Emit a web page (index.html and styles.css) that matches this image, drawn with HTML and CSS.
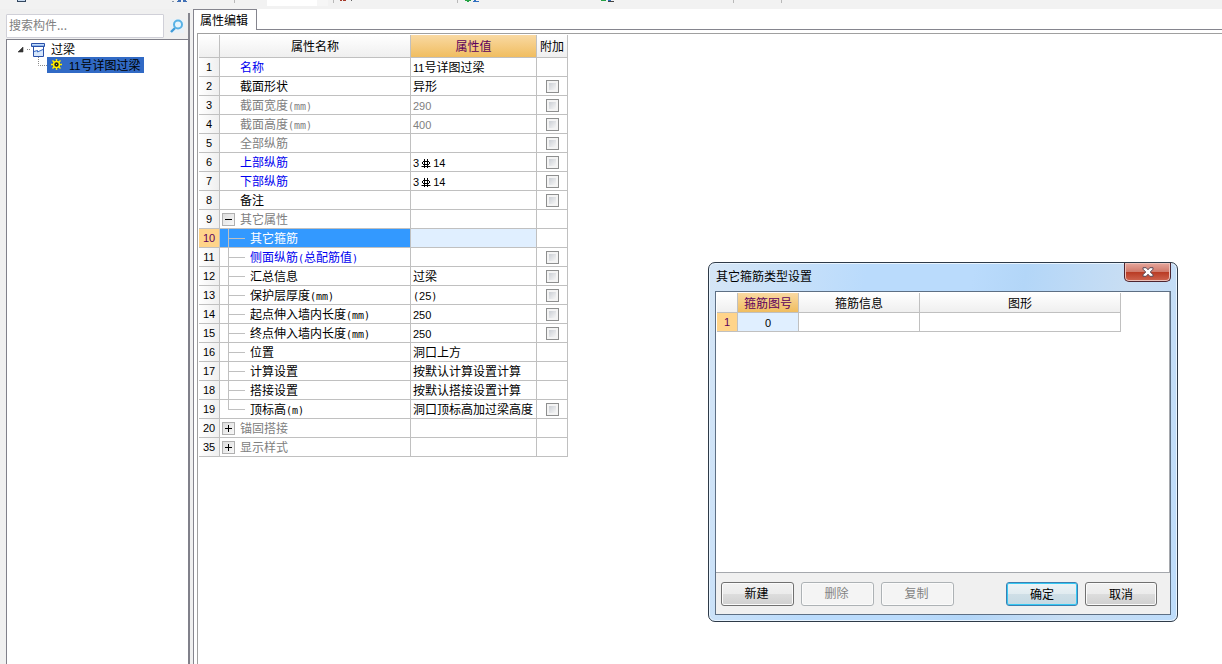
FILE: index.html
```html
<!DOCTYPE html>
<html lang="zh-CN">
<head>
<meta charset="utf-8">
<title>属性编辑</title>
<link rel="stylesheet" href="styles.css">
</head>
<body>
<header class="toolbar">
  <svg width="800" height="9" viewBox="0 0 800 9" aria-hidden="true">
    <path fill="#b9b9b9" d="M234 0h1v3h-1zM333 0h1v3h-1zM457 0h1v3h-1zM733 0h1v3h-1zM781 0h1v3h-1z"/>
    <path fill="#fff" d="M267 0h50v6h-50z"/><path fill="#f6f6f6" d="M317 0h11v6h-11z"/>
    <path fill="#c9dcf2" d="M18 0h7v1h-7z"/><path fill="#33475f" d="M17 0h1v2h-1zM25 0h1v2h-1zM17 1h9v1h-9z"/>
    <path fill="#3f6fb5" d="M178 0h3v2h-4v-1h1zM183 0h3v1h1v1h-4z"/><path fill="#8a98aa" d="M172 1h2v1h-2z"/>
    <path fill="#a53a2a" d="M340 0h2v1h-2zM343 0h3v1h-3z"/><path fill="#666" d="M351 0h1v1h-1z"/>
    <path fill="#25a244" d="M465 0h6v1h-2v1h-2v-1h-2zM601 0h5v1h-5z"/>
    <path fill="#2f6fc0" d="M474 0h2v1h3v1h-6v-1h1zM608 0h3v1h-3z"/><path fill="#444" d="M608 1h6v1h-6z"/>
  </svg>
</header>
<main class="workspace">
  <aside class="sidebar">
    <div class="search">
      <input class="search-input" type="text" placeholder="搜索构件..." aria-label="搜索构件">
      <button class="search-button" aria-label="搜索">
        <svg width="14" height="14" viewBox="0 0 14 14"><path d="M1 13l4-4" stroke="#3f9bd8" stroke-width="2.400"/><circle cx="8" cy="5.500" r="4" fill="#e6f5fd" stroke="#58b2e6" stroke-width="2"/></svg>
      </button>
    </div>
    <div class="tree">
      <div class="tree-row">
        <svg width="27" height="17" viewBox="0 0 27 17" aria-hidden="true">
          <path d="M5 6v5H0z" fill="#333" stroke="#333" stroke-width=".6"/><path d="M9 8.500h4" stroke="#888" stroke-dasharray="1 1"/>
          <path d="M15.500 5.500h10v10h-10z" fill="#d5e6fb" stroke="#2a50a8"/><path d="M13.500 2.500h13v3h-13z" fill="#8db6ee" stroke="#2a50a8"/><path d="M14 3h12v1H14z" fill="#c4dcfa"/><path d="M16 6h9v2l-3 1.500-2 .5v-1l-4 1z" fill="#fff"/><path d="M16 10.500l3.500-1v1.500l5.500-2.500" fill="none" stroke="#3b6cc4"/>
        </svg>
        <span class="tree-label">过梁</span>
      </div>
      <div class="tree-row tree-child">
        <svg width="9" height="16" viewBox="0 0 9 16" aria-hidden="true"><path d="M.5 0v8.500H9" fill="none" stroke="#888" stroke-dasharray="1 1"/></svg>
        <span class="tree-selected">
          <svg width="12" height="12" viewBox="0 0 12 12" aria-hidden="true"><circle cx="5.500" cy="5.500" r="4" fill="#222"/><path d="M5.500 0v2.500M5.500 8.500V11M0 5.500h2.500M8.500 5.500H11M1.500 1.500l2 2M7.500 7.500l2 2M9.500 1.500l-2 2M1.500 9.500l2-2" stroke="#fff000" stroke-width="1.400"/><circle cx="5.500" cy="5.500" r="3" fill="#222" stroke="#fff000" stroke-width="1.600"/><path d="M5 5h1v1H5z" fill="#fff000"/></svg>
          <span><span class="d">11</span>号详图过梁</span>
        </span>
      </div>
    </div>
  </aside>
  <section class="editor">
    <div class="tabs"><button class="tab">属性编辑</button><div class="tab-rest"></div></div>
    <div class="editor-body">
      <div class="grid-frame">
        <table class="grid props">
          <colgroup><col class="c-num"><col class="c-name"><col class="c-value"><col class="c-extra"></colgroup>
          <thead><tr><th></th><th>属性名称</th><th class="active">属性值</th><th>附加</th></tr></thead>
          <tbody>
            <tr><th>1</th><td class="name blue">名称</td><td><span class="d">11</span>号详图过梁</td><td></td></tr>
            <tr><th>2</th><td class="name">截面形状</td><td>异形</td><td class="tick"><input type="checkbox" aria-label="截面形状"></td></tr>
            <tr class="muted"><th>3</th><td class="name">截面宽度<span class="n">(mm)</span></td><td><span class="d">290</span></td><td class="tick"><input type="checkbox" aria-label="截面宽度"></td></tr>
            <tr class="muted"><th>4</th><td class="name">截面高度<span class="n">(mm)</span></td><td><span class="d">400</span></td><td class="tick"><input type="checkbox" aria-label="截面高度"></td></tr>
            <tr class="muted"><th>5</th><td class="name">全部纵筋</td><td></td><td class="tick"><input type="checkbox" aria-label="全部纵筋"></td></tr>
            <tr><th>6</th><td class="name blue">上部纵筋</td><td><span class="d">3</span><svg class="rebar" width="14" height="9" viewBox="0 0 14 9" role="img" aria-label="钢筋"><path d="M5.500 0v9M8.500 0v9M2.500 7.500h9" stroke="#000"/><path d="M4 2.500h6M4 5.500h6M3.500 3v2M10.500 3v2" fill="none" stroke="#000"/></svg><span class="d">14</span></td><td class="tick"><input type="checkbox" aria-label="上部纵筋"></td></tr>
            <tr><th>7</th><td class="name blue">下部纵筋</td><td><span class="d">3</span><svg class="rebar" width="14" height="9" viewBox="0 0 14 9" role="img" aria-label="钢筋"><path d="M5.500 0v9M8.500 0v9M2.500 7.500h9" stroke="#000"/><path d="M4 2.500h6M4 5.500h6M3.500 3v2M10.500 3v2" fill="none" stroke="#000"/></svg><span class="d">14</span></td><td class="tick"><input type="checkbox" aria-label="下部纵筋"></td></tr>
            <tr><th>8</th><td class="name">备注</td><td></td><td class="tick"><input type="checkbox" aria-label="备注"></td></tr>
            <tr class="muted"><th>9</th><td class="group"><div class="group-row"><button class="toggle" aria-label="收起"></button>其它属性</div></td><td></td><td></td></tr>
            <tr class="selected"><th>10</th><td class="child">其它箍筋</td><td></td><td></td></tr>
            <tr><th>11</th><td class="child blue">侧面纵筋<span class="n">(</span>总配筋值<span class="n">)</span></td><td></td><td class="tick"><input type="checkbox" aria-label="侧面纵筋"></td></tr>
            <tr><th>12</th><td class="child">汇总信息</td><td>过梁</td><td class="tick"><input type="checkbox" aria-label="汇总信息"></td></tr>
            <tr><th>13</th><td class="child">保护层厚度<span class="n">(mm)</span></td><td><span class="n">(</span><span class="d">25</span><span class="n">)</span></td><td class="tick"><input type="checkbox" aria-label="保护层厚度"></td></tr>
            <tr><th>14</th><td class="child">起点伸入墙内长度<span class="n">(mm)</span></td><td><span class="d">250</span></td><td class="tick"><input type="checkbox" aria-label="起点伸入墙内长度"></td></tr>
            <tr><th>15</th><td class="child">终点伸入墙内长度<span class="n">(mm)</span></td><td><span class="d">250</span></td><td class="tick"><input type="checkbox" aria-label="终点伸入墙内长度"></td></tr>
            <tr><th>16</th><td class="child">位置</td><td>洞口上方</td><td></td></tr>
            <tr><th>17</th><td class="child">计算设置</td><td>按默认计算设置计算</td><td></td></tr>
            <tr><th>18</th><td class="child">搭接设置</td><td>按默认搭接设置计算</td><td></td></tr>
            <tr><th>19</th><td class="child last">顶标高<span class="n">(m)</span></td><td>洞口顶标高加过梁高度</td><td class="tick"><input type="checkbox" aria-label="顶标高"></td></tr>
            <tr class="muted"><th>20</th><td class="group"><div class="group-row"><button class="toggle plus" aria-label="展开"></button>锚固搭接</div></td><td></td><td></td></tr>
            <tr class="muted"><th>35</th><td class="group"><div class="group-row"><button class="toggle plus" aria-label="展开"></button>显示样式</div></td><td></td><td></td></tr>
          </tbody>
        </table>
      </div>
    </div>
  </section>
</main>
<div class="dialog" role="dialog" aria-labelledby="dialog-title">
  <div class="titlebar">
    <span class="title" id="dialog-title">其它箍筋类型设置</span>
    <button class="close" aria-label="关闭">
      <svg width="12" height="10" viewBox="0 0 12 10"><path d="M1 .7h3.200L6 2.800 7.800.7H11v1.500L8.300 5 11 7.800v1.500H7.800L6 7.200 4.200 9.300H1V7.800L3.700 5 1 2.200z" fill="#fff" stroke="#5b4a58" stroke-width="1"/></svg>
    </button>
  </div>
  <div class="dialog-body">
    <div class="dialog-grid">
      <table class="grid stirrups">
        <colgroup><col class="c-num"><col class="c-code"><col class="c-info"><col class="c-shape"></colgroup>
        <thead><tr><th></th><th class="active">箍筋图号</th><th>箍筋信息</th><th>图形</th></tr></thead>
        <tbody><tr class="current"><th>1</th><td class="code"><span class="d">0</span></td><td></td><td></td></tr></tbody>
      </table>
    </div>
    <div class="actions">
      <button class="btn">新建</button>
      <button class="btn" disabled>删除</button>
      <button class="btn" disabled>复制</button>
      <span class="spacer"></span>
      <button class="btn answer primary">确定</button>
      <button class="btn answer">取消</button>
    </div>
  </div>
</div>
</body>
</html>
```
FILE: styles.css
```css
* { box-sizing: border-box; }

body {
  margin: 0;
  height: 100vh;
  display: flex;
  flex-direction: column;
  overflow: hidden;
  position: relative;
  background: #fff;
  color: #000;
  font: 12px/18px "Noto Sans CJK SC", sans-serif;
}

button, input { font: inherit; margin: 0; }
svg { display: block; flex: none; }

/* Half-width latin text and digits */
.n { font: 10px/10px "DejaVu Sans Mono", monospace; }
.d { font: 11px/11px "Liberation Sans", sans-serif; }

.toolbar { height: 9px; flex: none; overflow: hidden; background: #f2f2f2; }
.workspace { flex: 1; min-height: 0; display: flex; }

/* Component tree */
.sidebar {
  width: 193px;
  flex: none;
  display: flex;
  flex-direction: column;
  padding: 4px 3px 0 6px;
  background: #f0f0f0;
}
.search {
  height: 26px;
  display: flex;
  align-items: center;
  border-right: 2px solid #85858e;
}
.search-input {
  width: 158px;
  height: 24px;
  padding: 0 2px 4px;
  border: 1px solid #d0d0d8;
  border-radius: 1px;
  background: #fff;
}
.search-input::placeholder { color: #808080; opacity: 1; }
.search-button { margin-left: 6px; padding: 0; border: 0; background: #e9f1f7; }
.tree {
  flex: 1;
  padding: 1px 0 0 11px;
  border: 1px solid #80808a;
  border-right-width: 2px;
  border-bottom: 0;
  background: #fff;
}
.tree-row { height: 16px; display: flex; align-items: center; gap: 6px; }
.tree-child { gap: 0; padding-left: 20px; }
.tree-selected {
  height: 16px;
  display: flex;
  align-items: center;
  gap: 6px;
  padding: 0 4px;
  background: #316ac5;
}

/* Property editor */
.editor { flex: 1; min-width: 0; display: flex; flex-direction: column; }
.tabs { display: flex; height: 21px; }
.tab {
  width: 64px;
  padding: 0 2px 0 0;
  border: 1px solid #85858e;
  border-bottom: 0;
  background: #fff;
}
.tab-rest { flex: 1; border-bottom: 1px solid #85858e; }
.editor-body { flex: 1; padding: 3px 0 0 3px; border-left: 1px solid #85858e; }
.grid-frame {
  height: 100%;
  padding: 1px;
  border: 1px solid #a0a0a0;
  border-right: 0;
  border-bottom: 0;
}

.grid { table-layout: fixed; border-collapse: separate; border-spacing: 0; }
.grid th, .grid td {
  height: 19px;
  padding: 0 0 0 2px;
  border: solid #c0c0c0;
  border-width: 0 1px 1px 0;
  line-height: 16px;
  white-space: nowrap;
  overflow: hidden;
  text-align: left;
  vertical-align: middle;
}
.grid th {
  padding: 0;
  font-weight: normal;
  text-align: center;
  background: linear-gradient(#fff, #efefef);
}
.grid tbody th {
  font: 11px/16px "Liberation Sans", sans-serif;
  background: linear-gradient(90deg, #fff, #efefef);
}
.grid thead .active { color: #5c005c; background: linear-gradient(#f9d9a2, #f0bd60); }
.props { width: 369px; }
.props thead th { height: 23px; }
.c-num { width: 21px; }
.c-name { width: 191px; }
.c-value { width: 126px; }
.c-extra { width: 31px; }

.grid .name { padding-left: 20px; }
.grid .blue { color: #0000f0; }
.grid .muted td { color: #808080; }
.grid .child {
  padding-left: 30px;
  background-image: linear-gradient(#c0c0c0, #c0c0c0), linear-gradient(#c0c0c0, #c0c0c0);
  background-repeat: no-repeat;
  background-position: 8px 0, 8px 9px;
  background-size: 1px 100%, 17px 1px;
}
.grid .last { background-size: 1px 9px, 17px 1px; }
.grid .selected .child { color: #fff; background-color: #39f; }
.grid .selected .child + td { background: #e0efff; }
.grid .selected th, .grid .current th { color: #5c005c; background: #ffd48a; }
.group-row { display: flex; align-items: center; gap: 5px; }

.toggle {
  width: 13px;
  height: 13px;
  padding: 0;
  border: 1px solid #b0b0b0;
  background:
    linear-gradient(#000, #000) center / 7px 1px no-repeat,
    linear-gradient(135deg, #ddd, #f8f8f8);
}
.toggle.plus {
  background:
    linear-gradient(#000, #000) center / 7px 1px no-repeat,
    linear-gradient(#000, #000) center / 1px 7px no-repeat,
    linear-gradient(135deg, #ddd, #f8f8f8);
}
.grid .tick { padding: 0; }
.tick input {
  appearance: none;
  display: block;
  width: 13px;
  height: 13px;
  margin: 0 auto;
  padding: 2px;
  border: 1px solid #8e8f8f;
  background: linear-gradient(135deg, #cbcfd5, #f6f6f6) content-box, #f4f4f4;
}
.rebar { display: inline-block; vertical-align: -1px; }

/* Stirrup type dialog */
.dialog {
  position: absolute;
  left: 708px;
  top: 262px;
  width: 470px;
  height: 360px;
  display: flex;
  flex-direction: column;
  padding: 0 6px 6px;
  border: 1px solid #2e3a48;
  border-radius: 7px;
  background: linear-gradient(100deg, #d6e6f6 0, #badbfc 30%, #badbfc 50%, #b3d6f8 60%, #c9def3 80%, #bddcfb 100%);
  box-shadow: inset 0 0 0 1px #e8f4ff;
}
.titlebar { height: 28px; flex: none; display: flex; justify-content: space-between; align-items: flex-start; }
.title { padding: 4px 1px; }
.close {
  width: 47px;
  height: 19px;
  display: flex;
  align-items: center;
  justify-content: center;
  padding: 0;
  border: 1px solid #4d2530;
  border-top: 0;
  border-radius: 0 0 5px 5px;
  background: linear-gradient(#e6a79d, #d07a6b 48%, #b83a23 50%, #cf6550);
  box-shadow: inset 0 0 0 1px #ecc0b8;
}
.dialog-body {
  flex: 1;
  display: flex;
  flex-direction: column;
  border: 1px solid #5d6f84;
  background: #f0f0f0;
}
.dialog-grid {
  flex: 1;
  padding: 1px;
  border: 1px solid #a5a8ad;
  border-top: 0;
  border-left: 0;
  background: #fff;
}
.stirrups { width: 404px; }
.stirrups .c-code { width: 61px; }
.stirrups .c-info { width: 121px; }
.stirrups .c-shape { width: 201px; }
.grid .code { padding: 0; text-align: center; background: #e0efff; }
.stirrups thead th { height: 20px; }

.actions { display: flex; gap: 7px; height: 41px; align-items: center; padding: 0 13px 0 5px; }
.btn {
  width: 73px;
  height: 24px;
  padding: 0 2px 2px 0;
  border: 1px solid #707070;
  border-radius: 3px;
  color: #000;
  background: linear-gradient(#f2f2f2, #ebebeb 50%, #ddd 50%, #cfcfcf) border-box;
  box-shadow: inset 0 0 0 1px #fbfbfb;
}
.btn.answer { width: 72px; padding: 0; }
.btn:disabled { color: #838383; border-color: #adb2b5; background: #f4f4f4; }
.primary {
  border-color: #3c7fb1;
  background: linear-gradient(#eef4f7, #e0ebf0 50%, #cfdfe7 50%, #c4d9e2) border-box;
  box-shadow: inset 0 0 0 1px #35c8f3;
}
.spacer { flex: 1; }
```
